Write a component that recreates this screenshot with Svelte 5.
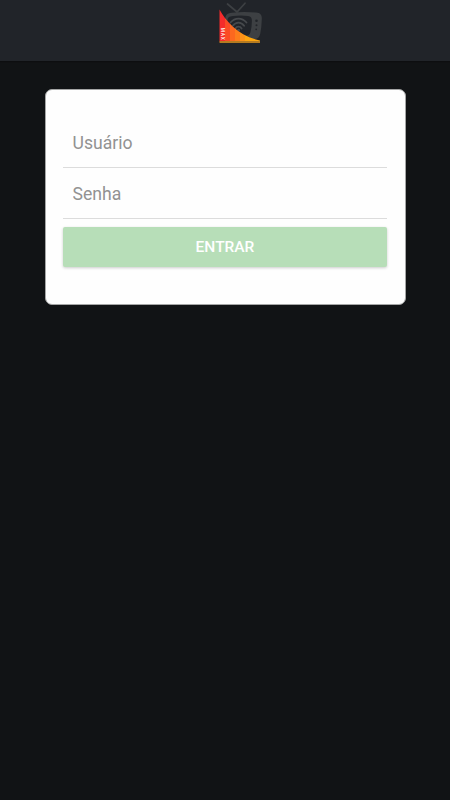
<script lang="ts">
	let username = $state('');
	let password = $state('');

	const isDisabled = $derived(!username || !password);

	const onSubmit = (event: SubmitEvent) => event.preventDefault();
</script>

<div class="page">
	<header class="toolbar">
		<svg class="logo" width="60" height="50" viewBox="0 0 60 50" role="img" aria-label="MAX">
			<defs>
				<clipPath id="sail">
					<path d="M9.5 9.5C16 21.5 29 36.5 50 40.5V41.5H9.5z" />
				</clipPath>
			</defs>
			<g fill="none" stroke="#3d4043" stroke-linecap="round">
				<path d="M17.5 4L27 12L35 3.2" stroke-width="1.7" />
			</g>
			<!-- tv body, screen and knobs -->
			<path
				d="M15 23C15 15 16.5 13.3 22 12.8Q33 11.4 46 12.6C50.5 13 52 15 51.8 19Q51.6 27 50.3 33.5C49.3 38 47 39.2 42 39.5H30z"
				fill="#3d4043"
			/>
			<path
				d="M17.5 21C17.5 17.5 19 16.3 23 16Q31 15.2 38 16C41 16.4 42 18 41.9 21Q41.8 27 40.5 32C39.8 35 38 36 34 36L20 27z"
				fill="#212429"
			/>
			<g fill="#212429">
				<circle cx="46.5" cy="20.7" r="1.3" />
				<circle cx="46.5" cy="25.2" r="1" />
				<circle cx="46.2" cy="29.3" r="0.9" />
			</g>
			<g fill="none" stroke="#46494c" stroke-width="1.8" stroke-linecap="round">
				<path d="M20.5 22.5C25 17.2 32 17.2 36.5 22.5" />
				<path d="M22.8 25.8C26 21.5 31 21.5 34.1 25.8" />
				<path d="M25.4 28.5C27 26 30 26 31.6 28.5" />
			</g>
			<circle cx="28.5" cy="30.3" r="1.5" fill="#46494c" />
			<g clip-path="url(#sail)">
				<path d="M9 8h6v34H9z" fill="#f52b2b" />
				<path d="M15 8h5v34h-5z" fill="#fb4b25" />
				<path d="M20 8h5v34h-5z" fill="#fc681f" />
				<path d="M25 8h5v34h-5z" fill="#fd7d1b" />
				<path d="M30 8h5v34h-5z" fill="#fd9217" />
				<path d="M35 8h15v34H35z" fill="#fea60f" />
			</g>
			<path d="M9.5 41h40.5v2H9.5z" fill="#b57b20" />
			<text transform="translate(10.6 27.7) rotate(90)" textLength="12" class="mark">MAX</text>
		</svg>
	</header>

	<main>
		<form class="card" onsubmit={onSubmit}>
			<input type="text" placeholder="Usuário" aria-label="Usuário" bind:value={username} />
			<input type="password" placeholder="Senha" aria-label="Senha" bind:value={password} />
			<button type="submit" disabled={isDisabled}>ENTRAR</button>
		</form>
	</main>
</div>

<style>
	:global(body) {
		background: #111315;
	}

	.page {
		min-height: 100vh;
		background: #111315;
		font-family: Roboto, sans-serif;
	}

	.toolbar {
		height: 61px;
		box-sizing: border-box;
		padding-left: 30px;
		display: flex;
		justify-content: center;
		background: #212429;
		box-shadow: 0 1px 1px #0d0e10;
	}

	.logo {
		display: block;
	}

	.mark {
		fill: #ffe0d8;
		font-family: Roboto, sans-serif;
		font-size: 4.8px;
		font-weight: 700;
	}

	main {
		padding: 28px 44px 0 45px;
	}

	.card {
		height: 216px;
		box-sizing: border-box;
		padding: 28px 18px 0 17px;
		display: flex;
		flex-direction: column;
		background: #fefefe;
		border: 1px solid #a5a6a6;
		border-radius: 7px;
	}

	input {
		height: 50px;
		box-sizing: border-box;
		margin: 0 0 1px;
		padding: 0 9.5px;
		border: none;
		border-bottom: 1px solid #dcdcdc;
		border-radius: 0;
		outline: none;
		background: #fefefe;
		color: #222;
		font-family: inherit;
		font-size: 17.6px;
	}

	input::placeholder {
		color: #929292;
		opacity: 1;
	}

	button {
		height: 40px;
		margin: 7px 0 0;
		padding: 0 0 1px;
		border: none;
		border-radius: 2px;
		background: #4caf50;
		color: #fff;
		font-family: inherit;
		font-size: 15.5px;
		font-weight: 500;
		cursor: pointer;
		box-shadow: 0 1px 3px rgba(0, 0, 0, 0.2);
	}

	button:disabled {
		background: #b7deb8;
		cursor: default;
	}
</style>
